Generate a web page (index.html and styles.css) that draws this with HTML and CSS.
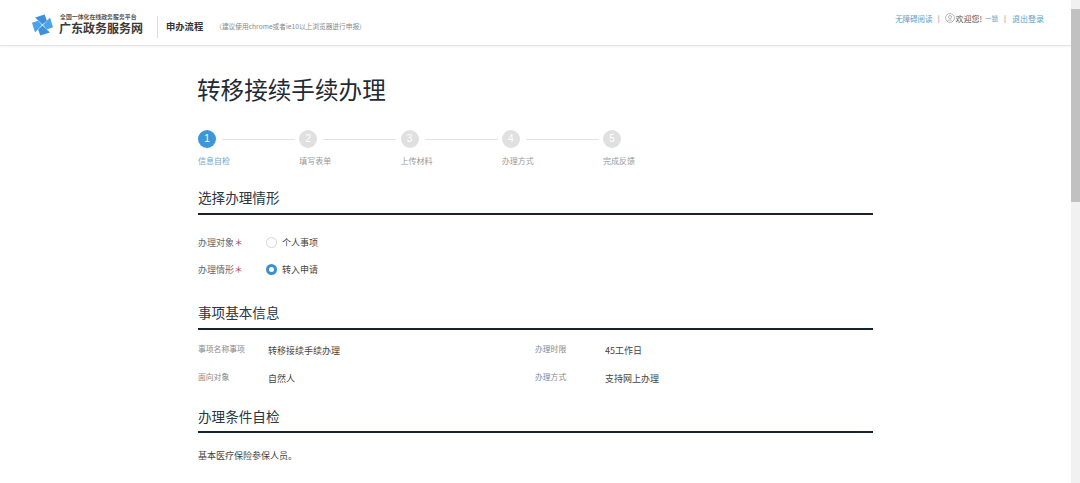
FILE: index.html
```html
<!DOCTYPE html>
<html lang="zh-CN">
<head>
<meta charset="utf-8">
<title>转移接续手续办理</title>
<link rel="stylesheet" href="styles.css">
</head>
<body>
<div class="window">
  <div class="page">
    <header class="topbar">
      <div class="brand">
        <svg class="logo" viewBox="0 0 24 24" aria-hidden="true">
          <path class="logo-a" d="M3.500 3.500 14.500 0 17 7 12 11.400Z"/>
          <path class="logo-b" d="M20.500 3.500 24 14.500 17 17 12.600 12Z"/>
          <path class="logo-a" d="M20.500 20.500 9.500 24 7 17 12 12.600Z"/>
          <path class="logo-b" d="M3.500 20.500 0 9.500 7 7 11.400 12Z"/>
        </svg>
        <div class="brand-text">
          <div class="brand-sub">全国一体化在线政务服务平台</div>
          <div class="brand-name">广东政务服务网</div>
        </div>
      </div>
      <div class="flow-title">申办流程</div>
      <div class="flow-note">（建议使用chrome或者ie10以上浏览器进行申报）</div>
      <nav class="top-links">
        <a class="link first-link">无障碍阅读</a>
        <span class="sep sep-first">|</span>
        <svg class="user" viewBox="0 0 10 10" aria-hidden="true">
          <circle cx="5" cy="5" r="4.400"/>
          <circle cx="5" cy="4" r="1.500"/>
          <path d="M2.400 8.200C3 6.500 7 6.500 7.600 8.200"/>
        </svg>
        <span class="welcome">欢迎您!</span>
        <a class="link user-name">一锁</a>
        <span class="sep">|</span>
        <a class="link">退出登录</a>
      </nav>
    </header>

    <main class="content">
      <h1 class="title">转移接续手续办理</h1>

      <ol class="steps">
        <li class="step active"><div class="step-head"><span class="dot">1</span><span class="bar"></span></div><div class="step-label">信息自检</div></li>
        <li class="step"><div class="step-head"><span class="dot">2</span><span class="bar"></span></div><div class="step-label">填写表单</div></li>
        <li class="step"><div class="step-head"><span class="dot">3</span><span class="bar"></span></div><div class="step-label">上传材料</div></li>
        <li class="step"><div class="step-head"><span class="dot">4</span><span class="bar"></span></div><div class="step-label">办理方式</div></li>
        <li class="step"><div class="step-head"><span class="dot">5</span></div><div class="step-label">完成反馈</div></li>
      </ol>

      <section class="section first">
        <h2 class="section-title">选择办理情形</h2>
        <div class="choices">
          <div class="choice">
            <span class="choice-label">办理对象<i class="star">＊</i></span>
            <span class="radio"></span>
            <span class="choice-value">个人事项</span>
          </div>
          <div class="choice">
            <span class="choice-label">办理情形<i class="star">＊</i></span>
            <span class="radio on"></span>
            <span class="choice-value">转入申请</span>
          </div>
        </div>
      </section>

      <section class="section second">
        <h2 class="section-title">事项基本信息</h2>
        <div class="info">
          <div class="info-item"><span class="info-key">事项名称事项</span><span class="info-val">转移接续手续办理</span></div>
          <div class="info-item"><span class="info-key">办理时限</span><span class="info-val">45工作日</span></div>
          <div class="info-item"><span class="info-key">面向对象</span><span class="info-val">自然人</span></div>
          <div class="info-item"><span class="info-key">办理方式</span><span class="info-val">支持网上办理</span></div>
        </div>
      </section>

      <section class="section third">
        <h2 class="section-title">办理条件自检</h2>
        <p class="cond">基本医疗保险参保人员。</p>
      </section>
    </main>
  </div>

  <div class="scrollbar">
    <div class="scroll-up"></div>
    <div class="scroll-thumb"></div>
  </div>
</div>
</body>
</html>
```
FILE: styles.css
```css
* { box-sizing: border-box; }
html, body { margin: 0; height: 100%; overflow: hidden; background: #fff; }
body {
  font-family: "Noto Sans CJK SC", "Liberation Sans", sans-serif;
  color: #333;
}
.window { display: flex; height: 483px; }
.page { flex: 1; min-width: 0; overflow: hidden; }

.topbar {
  height: 46px;
  display: flex;
  align-items: center;
  padding: 6px 27px 0 32px;
  border-bottom: 1px solid #e4e4e4;
  box-shadow: 0 1px 2px rgba(0,0,0,.05);
}
.brand { display: flex; align-items: center; width: 125px; }
.logo { width: 21px; height: 24px; margin: -2px 6px 0 0; flex: none; }
.logo-a { fill: #3f8fdc; }
.logo-b { fill: #4ba3e8; }
.brand-text { display: flex; flex-direction: column; margin-top: -3px; }
.brand-sub { font-size: 5.900px; line-height: 8px; font-weight: 700; color: #555; white-space: nowrap; margin-left: 1px; }
.brand-name { font-size: 12px; line-height: 15px; font-weight: 700; color: #3a3a3a; white-space: nowrap; margin-top: -0.500px; }
.flow-title {
  height: 22px;
  margin-top: 3px;
  line-height: 20px;
  font-size: 9.300px;
  font-weight: 700;
  color: #333;
  border-left: 1px solid #ddd;
  padding-left: 8px;
  margin-right: 15px;
}
.flow-note { font-size: 6.700px; color: #888; white-space: nowrap; margin-left: -3px; }
.top-links {
  margin-left: auto;
  margin-top: -15px;
  display: flex;
  align-items: center;
  font-size: 8px;
  color: #666;
  white-space: nowrap;
}
.link { color: #5b9fc9; }
.first-link { font-size: 7.500px; }
.sep { margin: 0 6px; color: #666; font-size: 7px; }
.sep-first { margin: 0 5px; }
.user { width: 10px; height: 10px; fill: none; stroke: #888; stroke-width: .6; margin-right: 1px; }
.welcome { color: #555; }
.user-name { margin-left: 3px; font-size: 6.500px; }

.content { padding: 0 0 0 198px; width: 873px; }
.title {
  margin: 26px 0 0 -1px;
  font-size: 23.600px;
  line-height: 34px;
  font-weight: 400;
  color: #1f2a33;
}
.steps { list-style: none; margin: 24px 0 0; padding: 0; display: flex; }
.step { width: 101.250px; }
.step-head { display: flex; align-items: center; height: 18px; }
.dot {
  width: 18px; height: 18px; border-radius: 50%;
  background: #e0e0e0; color: #fff;
  font-size: 10px; line-height: 18px; text-align: center;
  flex: none;
  font-family: "Liberation Sans", sans-serif;
}
.active .dot { background: #3c96d8; }
.bar { width: 73px; height: 1px; background: #e3e3e3; margin-left: 6px; }
.step-label { margin-top: 7px; font-size: 8px; line-height: 12px; color: #999; white-space: nowrap; }
.active .step-label { color: #6fa5c6; }

.section-title {
  margin: 0;
  box-sizing: content-box;
  height: 20px;
  padding-bottom: 5px;
  font-size: 13.600px;
  line-height: 20px;
  font-weight: 400;
  color: #2a3640;
  border-bottom: 2px solid #17222c;
}
.first { margin-top: 20px; }
.first .section-title { padding-bottom: 6px; }
.second { margin-top: 25px; }
.second .section-title { padding-bottom: 6px; }
.third { margin-top: 20px; }

.choices { display: flex; flex-direction: column; gap: 11px; margin-top: 19px; }
.choice { display: flex; align-items: center; height: 16px; }
.choice-label { width: 68px; font-size: 9px; color: #666; white-space: nowrap; }
.star { font-style: normal; color: #a83c68; }
.radio {
  width: 11px; height: 11px; border-radius: 50%;
  border: 1px solid #d4d4d4; background: #fff;
  flex: none;
}
.radio.on { border: 3px solid #3c8fcf; }
.choice-value { margin-left: 5px; font-size: 9px; color: #444; white-space: nowrap; }

.info { display: grid; grid-template-columns: 337px 1fr; row-gap: 12px; margin-top: 12px; }
.info-item { display: flex; align-items: center; height: 16px; }
.info-key { width: 70px; font-size: 7.800px; color: #888; white-space: nowrap; margin-top: -3px; }
.info-val { font-size: 9px; color: #444; white-space: nowrap; }

.cond { margin: 15px 0 0; font-size: 9px; line-height: 16px; color: #444; }

.scrollbar { width: 9px; background: #f1f1f1; display: flex; flex-direction: column; flex: none; }
.scroll-up { height: 9px; background: #f1f1f1; }
.scroll-thumb { height: 193px; background: #c1c1c1; }
```
